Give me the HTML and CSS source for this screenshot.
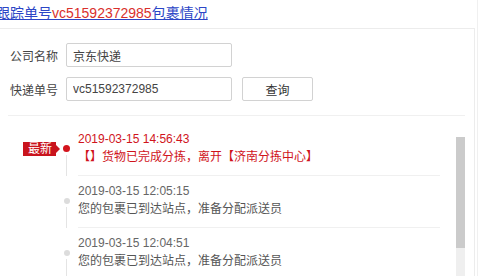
FILE: index.html
```html
<!DOCTYPE html>
<html lang="zh-CN">
<head>
<meta charset="utf-8">
<title>包裹跟踪</title>
<link rel="stylesheet" href="styles.css">
</head>
<body>
<div class="page">
  <h1 class="title"><a href="#" class="title-link">跟踪单号<span class="title-no">vc51592372985</span>包裹情况</a></h1>
  <div class="panel">
    <div class="panel-inner">
      <form class="form">
        <div class="form-row">
          <label class="form-label">公司名称</label>
          <input class="form-input" type="text" value="京东快递">
        </div>
        <div class="form-row">
          <label class="form-label">快递单号</label>
          <input class="form-input" type="text" value="vc51592372985">
          <button class="form-btn" type="button">查询</button>
        </div>
      </form>
      <div class="track">
        <ul class="track-list">
          <li class="entry entry-latest">
            <div class="marker">
              <div class="marker-row">
                <span class="badge">最新</span>
                <span class="dot dot-red"></span>
              </div>
              <span class="line"></span>
            </div>
            <div class="entry-body">
              <div class="entry-time">2019-03-15 14:56:43</div>
              <div class="entry-desc">【】货物已完成分拣，离开【济南分拣中心】</div>
            </div>
          </li>
          <li class="entry">
            <div class="marker">
              <div class="marker-row">
                <span class="dot"></span>
              </div>
              <span class="line"></span>
            </div>
            <div class="entry-body">
              <div class="entry-time">2019-03-15 12:05:15</div>
              <div class="entry-desc">您的包裹已到达站点，准备分配派送员</div>
            </div>
          </li>
          <li class="entry">
            <div class="marker">
              <div class="marker-row">
                <span class="dot"></span>
              </div>
              <span class="line"></span>
            </div>
            <div class="entry-body">
              <div class="entry-time">2019-03-15 12:04:51</div>
              <div class="entry-desc">您的包裹已到达站点，准备分配派送员</div>
            </div>
          </li>
        </ul>
        <div class="scrollbar"><div class="scrollbar-thumb"></div></div>
      </div>
    </div>
  </div>
</div>
</body>
</html>
```
FILE: styles.css
```css
* { box-sizing: border-box; }
html, body { margin: 0; padding: 0; background: #fff; }
body {
  font-family: "Liberation Sans", "Noto Sans CJK SC", sans-serif;
  font-size: 12px;
  color: #333;
  overflow: hidden;
  height: 276px;
}
.page {
  width: 482px;
  margin-left: -4px;
  border-right: 1px solid #f0f0f0;
  height: 276px;
  overflow: hidden;
}
.title {
  margin: 0;
  padding: 3px 0 0 0;
  height: 28px;
  font-size: 14px;
  font-weight: normal;
  line-height: 20px;
}
.title-link { color: #2b45c6; text-decoration: underline; }
.title-no { color: #d9302c; }
.panel {
  width: 479px;
  border-top: 1px solid #ececec;
  border-right: 1px solid #ececec;
  height: 260px;
  padding-left: 12px;
}
.panel-inner {
  width: 457px;
}
.form {
  margin: 0;
  padding: 14px 0 14px 0;
  border-bottom: 1px solid #f0f0f0;
  display: flex;
  flex-direction: column;
  gap: 10px;
}
.form-row {
  display: flex;
  align-items: center;
}
.form-label {
  width: 48px;
  margin-left: 2px;
  margin-right: 8px;
  color: #444;
  font-size: 12px;
}
.form-input {
  width: 166px;
  height: 24px;
  border: 1px solid #d2d2d2;
  border-radius: 2px;
  padding: 0 6px;
  font-family: "Liberation Sans", "Noto Sans CJK SC", sans-serif;
  font-size: 12px;
  color: #444;
  background: #fff;
}
.form-btn {
  margin-left: 10px;
  width: 71px;
  height: 24px;
  border: 1px solid #d2d2d2;
  border-radius: 2px;
  background: #fff;
  font-family: "Liberation Sans", "Noto Sans CJK SC", sans-serif;
  font-size: 12px;
  color: #333;
  padding: 0;
}
.track {
  display: flex;
  padding-top: 8px;
}
.track-list {
  list-style: none;
  margin: 0;
  padding: 0;
  flex: 1;
  padding-right: 16px;
}
.entry {
  display: flex;
}
.marker {
  width: 70px;
  display: flex;
  flex-direction: column;
  align-items: flex-end;
  padding-right: 8px;
}
.marker-row {
  display: flex;
  align-items: center;
  height: 7px;
  margin-top: 21px;
}
.badge {
  position: relative;
  height: 14px;
  line-height: 14px;
  padding: 0 4px 0 5px;
  background: #c9141d;
  color: #fff;
  font-size: 12px;
  margin-right: 7px;
}
.badge::after {
  content: "";
  position: absolute;
  right: -4px;
  top: 3px;
  border-left: 4px solid #c9141d;
  border-top: 4px solid transparent;
  border-bottom: 4px solid transparent;
}
.dot {
  width: 6px;
  height: 6px;
  border-radius: 50%;
  background: #dcdcdc;
  margin-right: 0.5px;
}
.dot-red {
  width: 7px;
  height: 7px;
  background: #d3141d;
  margin-right: 0;
}
.line {
  flex: 1;
  width: 1px;
  background: #e4e4e4;
  margin-top: 3px;
  margin-right: 3px;
}
.entry-body {
  flex: 1;
  padding: 6px 0 9px;
  border-bottom: 1px solid #f0f0f0;
  line-height: 18px;
}
.entry-time {
  color: #666;
  font-size: 12px;
}
.entry-desc {
  color: #555;
  font-size: 12px;
}
.entry-latest .entry-time,
.entry-latest .entry-desc {
  color: #d0141c;
}
.scrollbar {
  width: 9px;
  margin-top: 13px;
  height: 200px;
  background: #efefef;
  margin-right: 0;
}
.scrollbar-thumb {
  height: 111px;
  background: #cbcbcb;
}
```
